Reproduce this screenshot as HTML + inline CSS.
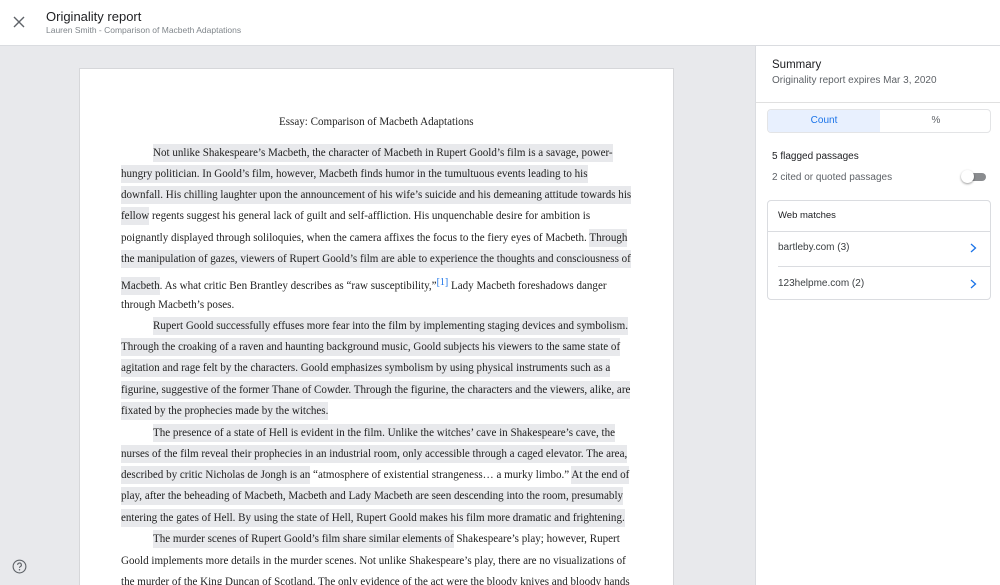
<!DOCTYPE html>
<html><head><meta charset="utf-8"><style>
*{margin:0;padding:0;box-sizing:border-box}
html,body{width:1000px;height:585px;overflow:hidden}
body{background:#fff;font-family:"Liberation Sans",Arial,sans-serif;position:relative}
.hdr{position:absolute;left:0;top:0;width:1000px;height:46px;background:#fff;border-bottom:1px solid #dadce0}
.main{position:absolute;left:0;top:46px;width:755px;height:539px;background:#e8e9ec}
.paper{position:absolute;left:79px;top:68px;width:595px;height:517px;background:#fff;border:1px solid #d6d7da;border-bottom:none}
.side{position:absolute;left:755px;top:46px;width:245px;height:539px;background:#fff;border-left:1px solid #dadce0}
.ln{position:absolute;left:121px;white-space:nowrap;font-family:"Liberation Serif","Times New Roman",serif;font-size:11.05px;color:#222;line-height:14px}
.h{background:#e8e9ec;padding:3px 0}
sup{color:#1a73e8;font-size:10px;vertical-align:4px}
</style></head><body>
<div class="hdr">
<svg style="position:absolute;left:13px;top:16px" width="12" height="12" viewBox="0 0 12 12"><path d="M1 1L11 11M11 1L1 11" stroke="#5f6368" stroke-width="1.4"/></svg>
<div style="position:absolute;left:46px;top:9px;font-size:13px;color:#202124">Originality report</div>
<div style="position:absolute;left:46px;top:25px;font-size:8.5px;color:#80868b">Lauren Smith - Comparison of Macbeth Adaptations</div>
</div>
<div class="main">
<svg style="position:absolute;left:12px;top:513px" width="15" height="15" viewBox="0 0 16 16"><circle cx="8" cy="8" r="6.8" fill="none" stroke="#5f6368" stroke-width="1.2"/><path d="M6 6.3a2 2 0 1 1 2.8 1.8c-.6.3-.8.7-.8 1.4" fill="none" stroke="#5f6368" stroke-width="1.2"/><circle cx="8" cy="11.4" r=".8" fill="#5f6368"/></svg>
</div>
<div class="paper"></div>
<div class="ln" style="left:279px;top:115px">Essay: Comparison of Macbeth Adaptations</div>
<div class="ln" style="top:146px;left:153px"><span class="h">Not unlike Shakespeare’s Macbeth, the character of Macbeth in Rupert Goold’s film is a savage, power-</span></div>
<div class="ln" style="top:167px"><span class="h">hungry politician. In Goold’s film, however, Macbeth finds humor in the tumultuous events leading to his</span></div>
<div class="ln" style="top:188px"><span class="h">downfall. His chilling laughter upon the announcement of his wife’s suicide and his demeaning attitude towards his</span></div>
<div class="ln" style="top:209px"><span class="h">fellow</span> regents suggest his general lack of guilt and self-affliction. His unquenchable desire for ambition is</div>
<div class="ln" style="top:231px">poignantly displayed through soliloquies, when the camera affixes the focus to the fiery eyes of Macbeth. <span class="h">Through</span></div>
<div class="ln" style="top:252px"><span class="h">the manipulation of gazes, viewers of Rupert Goold’s film are able to experience the thoughts and consciousness of</span></div>
<div class="ln" style="top:276px"><span class="h">Macbeth</span>. As what critic Ben Brantley describes as “raw susceptibility,”<sup>[1]</sup> Lady Macbeth foreshadows danger</div>
<div class="ln" style="top:298px">through Macbeth’s poses.</div>
<div class="ln" style="top:319px;left:153px"><span class="h">Rupert Goold successfully effuses more fear into the film by implementing staging devices and symbolism.</span></div>
<div class="ln" style="top:340px"><span class="h">Through the croaking of a raven and haunting background music, Goold subjects his viewers to the same state of</span></div>
<div class="ln" style="top:361px"><span class="h">agitation and rage felt by the characters. Goold emphasizes symbolism by using physical instruments such as a</span></div>
<div class="ln" style="top:383px"><span class="h">figurine, suggestive of the former Thane of Cowder. Through the figurine, the characters and the viewers, alike, are</span></div>
<div class="ln" style="top:404px"><span class="h">fixated by the prophecies made by the witches.</span></div>
<div class="ln" style="top:426px;left:153px"><span class="h">The presence of a state of Hell is evident in the film. Unlike the witches’ cave in Shakespeare’s cave, the</span></div>
<div class="ln" style="top:447px"><span class="h">nurses of the film reveal their prophecies in an industrial room, only accessible through a caged elevator. The area,</span></div>
<div class="ln" style="top:468px"><span class="h">described by critic Nicholas de Jongh is an</span> “atmosphere of existential strangeness… a murky limbo.” <span class="h">At the end of</span></div>
<div class="ln" style="top:489px"><span class="h">play, after the beheading of Macbeth, Macbeth and Lady Macbeth are seen descending into the room, presumably</span></div>
<div class="ln" style="top:511px"><span class="h">entering the gates of Hell. By using the state of Hell, Rupert Goold makes his film more dramatic and frightening.</span></div>
<div class="ln" style="top:532px;left:153px"><span class="h">The murder scenes of Rupert Goold’s film share similar elements of</span> Shakespeare’s play; however, Rupert</div>
<div class="ln" style="top:554px">Goold implements more details in the murder scenes. Not unlike Shakespeare’s play, there are no visualizations of</div>
<div class="ln" style="top:575px">the murder of the King Duncan of Scotland. The only evidence of the act were the bloody knives and bloody hands</div>
<div class="side">
<div style="position:absolute;left:16px;top:13px;font-size:11.5px;color:#202124">Summary</div>
<div style="position:absolute;left:16px;top:29px;font-size:10px;color:#5f6368">Originality report expires Mar 3, 2020</div>
<div style="position:absolute;left:0;top:56px;width:245px;border-top:1px solid #e0e0e0"></div>
<div style="position:absolute;left:11px;top:63px;width:224px;height:24px;border:1px solid #e3e4e6;border-radius:4px;overflow:hidden">
<div style="position:absolute;left:0;top:0;width:112px;height:24px;background:#e8f0fe;color:#1a73e8;font-size:10px;text-align:center;line-height:22px">Count</div>
<div style="position:absolute;left:112px;top:0;width:112px;height:24px;color:#5f6368;font-size:10px;text-align:center;line-height:22px">%</div>
</div>
<div style="position:absolute;left:16px;top:105px;font-size:10px;color:#202124">5 flagged passages</div>
<div style="position:absolute;left:16px;top:126px;font-size:10px;color:#5f6368">2 cited or quoted passages</div>
<div style="position:absolute;left:208px;top:127px;width:22px;height:8px;border-radius:4px;background:#8a8c8f"></div>
<div style="position:absolute;left:205px;top:124px;width:13px;height:13px;border-radius:50%;background:#fff;box-shadow:0 1px 2px rgba(0,0,0,.4)"></div>
<div style="position:absolute;left:11px;top:154px;width:224px;height:100px;border:1px solid #dadce0;border-radius:4px">
<div style="position:absolute;left:10px;top:9px;font-size:9.5px;color:#202124">Web matches</div>
<div style="position:absolute;left:0;top:30px;width:222px;border-top:1px solid #dadce0"></div>
<div style="position:absolute;left:10px;top:41px;font-size:10px;color:#3c4043">bartleby.com (3)</div>
<svg style="position:absolute;left:202px;top:42px" width="7" height="10" viewBox="0 0 7 10"><path d="M1 1L5.5 5L1 9" fill="none" stroke="#1a73e8" stroke-width="1.3"/></svg>
<div style="position:absolute;left:10px;top:65px;width:212px;border-top:1px solid #dadce0"></div>
<div style="position:absolute;left:10px;top:77px;font-size:10px;color:#3c4043">123helpme.com (2)</div>
<svg style="position:absolute;left:202px;top:78px" width="7" height="10" viewBox="0 0 7 10"><path d="M1 1L5.5 5L1 9" fill="none" stroke="#1a73e8" stroke-width="1.3"/></svg>
</div>
</div>
</body></html>
